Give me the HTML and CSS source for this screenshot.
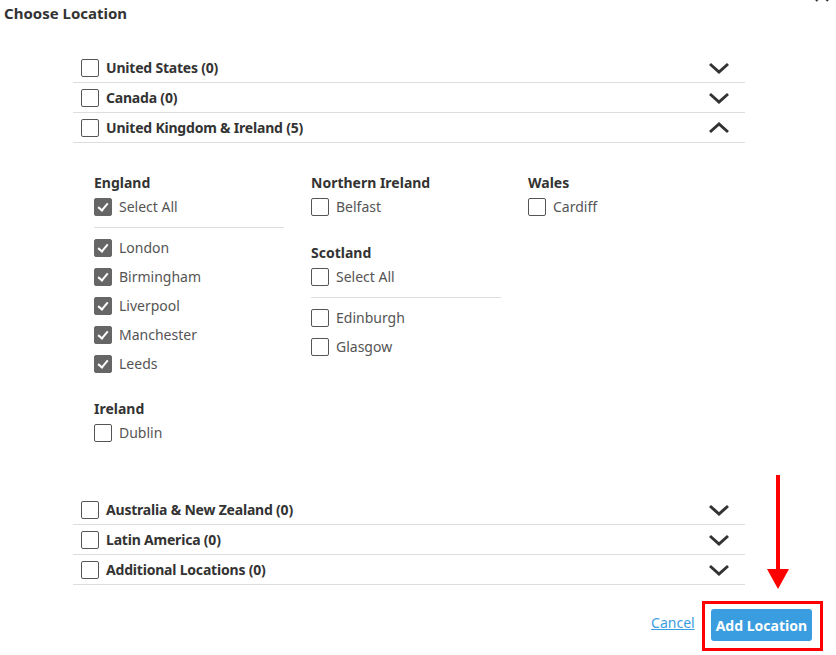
FILE: index.html
```html
<!DOCTYPE html>
<html lang="en">
<head>
<meta charset="utf-8">
<title>Choose Location</title>
<link rel="stylesheet" href="styles.css">
</head>
<body>
<div class="dialog">
  <div class="dialog-head">
    <h1 class="title">Choose Location</h1>
    <svg class="close" width="16" height="16" viewBox="0 0 16 16"><path d="M2 2L14 14M14 2L2 14" stroke="#333" stroke-width="2"/></svg>
  </div>

  <div class="regions">
    <div class="region">
      <span class="box"></span><span class="region-name">United States (0)</span>
      <svg class="chev" width="22" height="12" viewBox="0 0 22 12"><path d="M2 2L11 10L20 2" fill="none" stroke="#333" stroke-width="3"/></svg>
    </div>
    <div class="region">
      <span class="box"></span><span class="region-name">Canada (0)</span>
      <svg class="chev" width="22" height="12" viewBox="0 0 22 12"><path d="M2 2L11 10L20 2" fill="none" stroke="#333" stroke-width="3"/></svg>
    </div>
    <div class="region">
      <span class="box"></span><span class="region-name">United Kingdom &amp; Ireland (5)</span>
      <svg class="chev" width="22" height="12" viewBox="0 0 22 12"><path d="M2 10L11 2L20 10" fill="none" stroke="#333" stroke-width="3"/></svg>
    </div>

    <div class="panel">
      <div class="col">
        <div class="group">
          <div class="group-name">England</div>
          <label class="item"><span class="box on"></span>Select All</label>
          <div class="rule"></div>
          <label class="item"><span class="box on"></span>London</label>
          <label class="item"><span class="box on"></span>Birmingham</label>
          <label class="item"><span class="box on"></span>Liverpool</label>
          <label class="item"><span class="box on"></span>Manchester</label>
          <label class="item"><span class="box on"></span>Leeds</label>
        </div>
        <div class="group">
          <div class="group-name">Ireland</div>
          <label class="item"><span class="box"></span>Dublin</label>
        </div>
      </div>
      <div class="col">
        <div class="group">
          <div class="group-name">Northern Ireland</div>
          <label class="item"><span class="box"></span>Belfast</label>
        </div>
        <div class="group spaced">
          <div class="group-name">Scotland</div>
          <label class="item"><span class="box"></span>Select All</label>
          <div class="rule"></div>
          <label class="item"><span class="box"></span>Edinburgh</label>
          <label class="item"><span class="box"></span>Glasgow</label>
        </div>
      </div>
      <div class="col">
        <div class="group">
          <div class="group-name">Wales</div>
          <label class="item"><span class="box"></span>Cardiff</label>
        </div>
      </div>
    </div>

    <div class="region">
      <span class="box"></span><span class="region-name">Australia &amp; New Zealand (0)</span>
      <svg class="chev" width="22" height="12" viewBox="0 0 22 12"><path d="M2 2L11 10L20 2" fill="none" stroke="#333" stroke-width="3"/></svg>
    </div>
    <div class="region">
      <span class="box"></span><span class="region-name">Latin America (0)</span>
      <svg class="chev" width="22" height="12" viewBox="0 0 22 12"><path d="M2 2L11 10L20 2" fill="none" stroke="#333" stroke-width="3"/></svg>
    </div>
    <div class="region">
      <span class="box"></span><span class="region-name">Additional Locations (0)</span>
      <svg class="chev" width="22" height="12" viewBox="0 0 22 12"><path d="M2 2L11 10L20 2" fill="none" stroke="#333" stroke-width="3"/></svg>
    </div>
  </div>

  <div class="actions">
    <a class="cancel" href="#">Cancel</a>
    <button class="primary" type="button">Add Location</button>
  </div>

  <!-- callout pointing at the primary action -->
  <svg class="arrow" width="30" height="116" viewBox="0 0 30 116"><path d="M15 0V96" stroke="#f00" stroke-width="4"/><path d="M4 94H26L15 114Z" fill="#f00"/></svg>
  <div class="highlight"></div>
</div>
</body>
</html>
```

FILE: styles.css
```css
* { box-sizing: border-box; }

html, body {
  margin: 0;
  padding: 0;
  background: #fff;
}

body {
  font-family: "Noto Sans", "Open Sans", sans-serif;
  font-size: 14px;
  color: #333;
}

.dialog {
  position: relative;
  width: 836px;
  height: 655px;
  overflow: hidden;
}

.dialog-head {
  padding: 3px 0 0 4px;
  height: 53px;
}

.title {
  margin: 0;
  font-size: 15px;
  font-weight: 700;
  line-height: 20px;
  color: #333;
}

.close {
  position: absolute;
  right: 6px;
  top: -13px;
}

.regions {
  margin-left: 73px;
  width: 672px;
}

.region {
  display: flex;
  align-items: center;
  height: 30px;
  padding: 0 15px 0 8px;
  border-bottom: 1px solid #ddd;
}

.region-name {
  flex: 1;
  margin-left: 7px;
  font-weight: 700;
  color: #333;
  letter-spacing: -0.2px;
}

.chev { display: block; }

.box {
  flex: none;
  width: 18px;
  height: 18px;
  border: 1px solid #555;
  border-radius: 2px;
  background: #fff;
  position: relative;
}

.box.on {
  background: #666;
  border-color: #666;
}

.box.on::after {
  content: "";
  position: absolute;
  left: 5px;
  top: 2px;
  width: 4px;
  height: 8px;
  border: solid #fff;
  border-width: 0 2px 2px 0;
  transform: rotate(40deg);
}

.panel {
  display: flex;
  padding: 30px 0 48px 21px;
}

.col {
  width: 217px;
}

.group + .group {
  margin-top: 21px;
}

.group.spaced {
  margin-top: 22px;
}

.group-name {
  font-weight: 700;
  line-height: 19px;
  color: #333;
}

.item {
  display: flex;
  align-items: center;
  gap: 7px;
  height: 29px;
  width: 190px;
  color: #555;
}

.rule {
  width: 190px;
  height: 1px;
  background: #ddd;
  margin: 6px 0 5px;
}

.actions {
  display: flex;
  justify-content: flex-end;
  align-items: center;
  gap: 16px;
  padding: 24px 24px 0 0;
}

.cancel {
  margin-bottom: 6px;
  color: #3a9ddf;
  text-decoration: underline;
}

.primary {
  height: 32px;
  padding: 0 5px;
  border: 0;
  border-radius: 3px;
  background: #3a9ddf;
  color: #fff;
  font: 700 14px "Noto Sans", "Open Sans", sans-serif;
}

.arrow {
  position: absolute;
  left: 763px;
  top: 475px;
}

.highlight {
  position: absolute;
  left: 702px;
  top: 601px;
  width: 121px;
  height: 50px;
  border: 3px solid #f00;
}
```
